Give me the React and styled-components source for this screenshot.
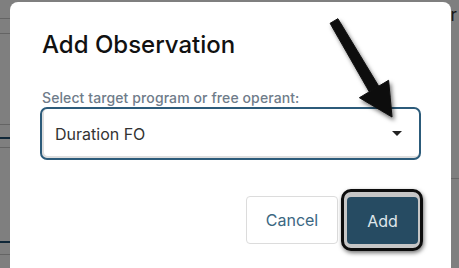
import React from 'react';
import styled, { createGlobalStyle } from 'styled-components';

const Global = createGlobalStyle`
  html, body { margin: 0; padding: 0; }
  body {
    width: 459px;
    height: 268px;
    overflow: hidden;
    font-family: Inter, "Noto Sans", "Liberation Sans", sans-serif;
    background: #fff;
  }
`;

function App() {
  return (
    <>
      <Global />
      <Page>
        <Side>
          <SideRow h={18} />
          <SideRow h={14} />
          <SideRow h={90} />
          <SideRow h={12} dark />
          <SideRow h={8} />
          <SideRow h={93} dark />
          <SideRow h={11} />
        </Side>
        <Main>
          <TopBar>
            <TopLabel>Filter</TopLabel>
          </TopBar>
          <MainLine />
        </Main>
      </Page>

      <Overlay>
        <Dialog>
          <Title>Add Observation</Title>
          <Label>Select target program or free operant:</Label>
          <Select>
            <span>Duration FO</span>
            <Caret />
          </Select>
          <Footer>
            <CancelButton>Cancel</CancelButton>
            <Highlight>
              <AddButton>Add</AddButton>
            </Highlight>
          </Footer>
        </Dialog>
      </Overlay>

      <Arrow viewBox="0 0 459 268">
        <defs>
          <filter id="shadow" x="-20%" y="-20%" width="150%" height="150%">
            <feDropShadow dx="2" dy="3" stdDeviation="2" floodColor="#000" floodOpacity="0.55" />
          </filter>
        </defs>
        <g filter="url(#shadow)" fill="#0b0b0b" stroke="#0b0b0b" strokeWidth="1" strokeLinejoin="round">
          <polygon points="337.9,18.7 330.1,23.3 369.3,91.8 378.7,86.2" />
          <polygon points="388.6,80.3 359.4,97.7 392,117" />
        </g>
      </Arrow>
    </>
  );
}

const Page = styled.div`
  display: flex;
  width: 459px;
  height: 268px;
`;

const Side = styled.div`
  width: 180px;
  display: flex;
  flex-direction: column;
`;

const SideRow = styled.div`
  height: ${p => p.h}px;
  border-bottom: ${p => (p.dark ? '2px solid #1f4f70' : '1px solid #c9c9c9')};
`;

const Main = styled.div`
  flex: 1;
  display: flex;
  flex-direction: column;
`;

const TopBar = styled.div`
  height: 178px;
  display: flex;
  justify-content: flex-end;
  align-items: flex-start;
  padding: 5px 0 0;
  box-sizing: border-box;
`;

const TopLabel = styled.span`
  font-size: 17px;
  line-height: 20px;
  color: #333;
  margin-right: 2px;
`;

const MainLine = styled.div`
  border-top: 1px solid #cfcfcf;
`;

const Overlay = styled.div`
  position: fixed;
  inset: 0;
  background: rgba(0, 0, 0, 0.5);
  display: flex;
  align-items: flex-start;
  padding: 2px 0 0 10px;
`;

const Dialog = styled.div`
  width: 441px;
  height: 300px;
  box-sizing: border-box;
  background: #fff;
  border-radius: 8px;
  padding: 28px 30px 0;
  display: flex;
  flex-direction: column;
`;

const Title = styled.h2`
  margin: 0;
  font-size: 24px;
  line-height: 30px;
  font-weight: 500;
  color: #111;
  padding-left: 2px;
`;

const Label = styled.label`
  margin-top: 29px;
  font-size: 14px;
  line-height: 17px;
  font-weight: 500;
  color: #6f7c8a;
  padding-left: 2px;
  letter-spacing: 0.1px;
`;

const Select = styled.div`
  margin-top: 1px;
  height: 53px;
  box-sizing: border-box;
  border: 2px solid #2c5b7a;
  border-radius: 7px;
  box-shadow: inset 1px -1px 0 1px #dedede;
  display: flex;
  align-items: center;
  justify-content: space-between;
  padding: 0 17px 0 13px;
  font-size: 16px;
  color: #333;
`;

const Caret = styled.span`
  width: 0;
  height: 0;
  border-left: 5px solid transparent;
  border-right: 5px solid transparent;
  border-top: 5px solid #222;
`;

const Footer = styled.div`
  margin-top: 29px;
  display: flex;
  justify-content: flex-end;
  align-items: center;
  gap: 3px;
  margin-right: -2px;
`;

const CancelButton = styled.button`
  width: 92px;
  height: 48px;
  border: 1px solid #dcdcdc;
  border-radius: 4px;
  background: #fff;
  font-family: inherit;
  font-size: 16px;
  color: #3b6782;
`;

const Highlight = styled.div`
  border: 3px solid #0d0d0d;
  border-radius: 10px;
  background: #c6c6c6;
  padding: 5px 2px 4px 3px;
  box-shadow: 1px 2px 4px rgba(0, 0, 0, 0.55);
  display: flex;
`;

const AddButton = styled.button`
  width: 71px;
  height: 47px;
  border: none;
  border-radius: 4px;
  background: #264b62;
  font-family: inherit;
  font-size: 16px;
  color: #dfe6eb;
`;

const Arrow = styled.svg`
  position: fixed;
  left: 0;
  top: 0;
  width: 459px;
  height: 268px;
  pointer-events: none;
`;

export default App;
